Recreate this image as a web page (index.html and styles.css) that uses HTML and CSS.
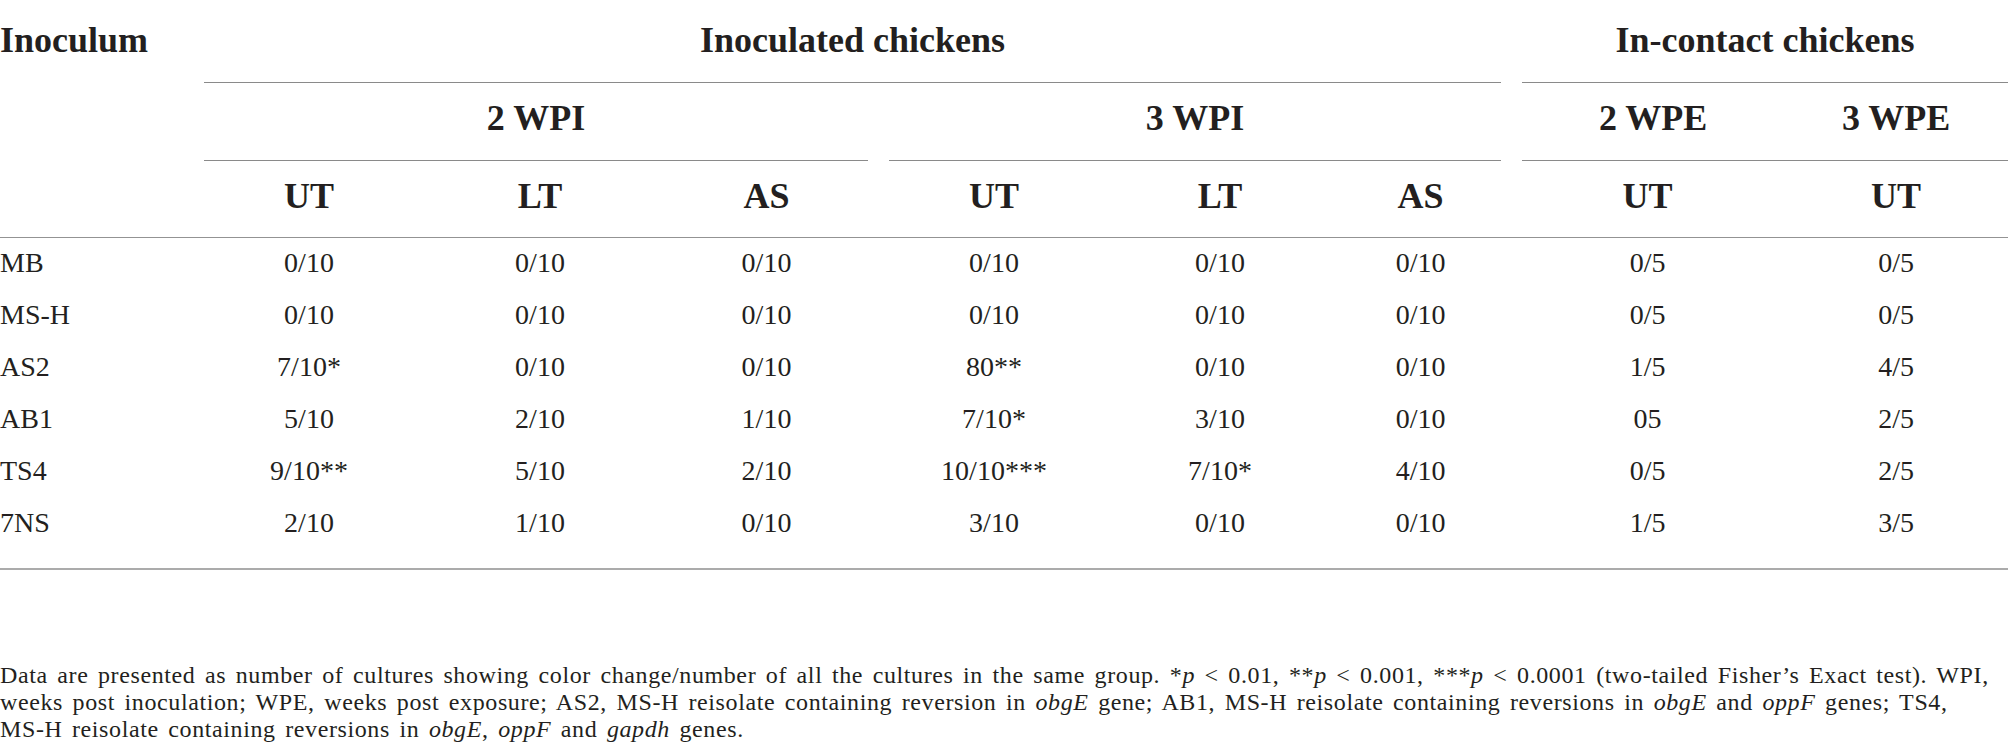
FILE: index.html
```html
<!DOCTYPE html>
<html lang="en">
<head>
  <meta charset="UTF-8">
  <meta name="viewport" content="width=device-width, initial-scale=1.0">
  <title>Cultures showing color change</title>
  <link rel="stylesheet" href="styles.css">
</head>
<body>
  <table class="results">
    <colgroup>
      <col class="c-label">
      <col class="c-ut1">
      <col class="c-lt1">
      <col class="c-as1">
      <col class="c-ut2">
      <col class="c-lt2">
      <col class="c-as2">
      <col class="c-wpe2">
      <col class="c-wpe3">
    </colgroup>
    <thead>
      <tr class="head-top">
        <th rowspan="3" class="label-head">Inoculum</th>
        <th colspan="6"><div class="rule">Inoculated chickens</div></th>
        <th colspan="2"><div class="rule open-right">In-contact chickens</div></th>
      </tr>
      <tr class="head-mid">
        <th colspan="3"><div class="rule">2 WPI</div></th>
        <th colspan="3"><div class="rule">3 WPI</div></th>
        <th><div class="rule open-right">2 WPE</div></th>
        <th><div class="rule open-left open-right">3 WPE</div></th>
      </tr>
      <tr class="head-low">
        <th>UT</th>
        <th>LT</th>
        <th>AS</th>
        <th>UT</th>
        <th>LT</th>
        <th>AS</th>
        <th>UT</th>
        <th>UT</th>
      </tr>
    </thead>
    <tbody>
      <tr>
        <td>MB</td>
        <td>0/10</td><td>0/10</td><td>0/10</td>
        <td>0/10</td><td>0/10</td><td>0/10</td>
        <td>0/5</td><td>0/5</td>
      </tr>
      <tr>
        <td>MS-H</td>
        <td>0/10</td><td>0/10</td><td>0/10</td>
        <td>0/10</td><td>0/10</td><td>0/10</td>
        <td>0/5</td><td>0/5</td>
      </tr>
      <tr>
        <td>AS2</td>
        <td>7/10*</td><td>0/10</td><td>0/10</td>
        <td>80**</td><td>0/10</td><td>0/10</td>
        <td>1/5</td><td>4/5</td>
      </tr>
      <tr>
        <td>AB1</td>
        <td>5/10</td><td>2/10</td><td>1/10</td>
        <td>7/10*</td><td>3/10</td><td>0/10</td>
        <td>05</td><td>2/5</td>
      </tr>
      <tr>
        <td>TS4</td>
        <td>9/10**</td><td>5/10</td><td>2/10</td>
        <td>10/10***</td><td>7/10*</td><td>4/10</td>
        <td>0/5</td><td>2/5</td>
      </tr>
      <tr class="last-row">
        <td>7NS</td>
        <td>2/10</td><td>1/10</td><td>0/10</td>
        <td>3/10</td><td>0/10</td><td>0/10</td>
        <td>1/5</td><td>3/5</td>
      </tr>
    </tbody>
  </table>

  <p class="note">
    <span class="note-line">Data are presented as number of cultures showing color change/number of all the cultures in the same group. *<em>p</em> &lt; 0.01, **<em>p</em> &lt; 0.001, ***<em>p</em> &lt; 0.0001 (two-tailed Fisher’s Exact test). WPI,</span>
    <span class="note-line">weeks post inoculation; WPE, weeks post exposure; AS2, MS-H reisolate containing reversion in <em>obgE</em> gene; AB1, MS-H reisolate containing reversions in <em>obgE</em> and <em>oppF</em> genes; TS4,</span>
    <span class="note-line">MS-H reisolate containing reversions in <em>obgE</em>, <em>oppF</em> and <em>gapdh</em> genes.</span>
  </p>
</body>
</html>
```

FILE: styles.css
```css
html, body {
  margin: 0;
  padding: 0;
  background: #fff;
  color: #231f20;
  font-family: "Liberation Serif", "Times New Roman", serif;
}
.results {
  width: 2008px;
  table-layout: fixed;
  border-collapse: separate;
  border-spacing: 0;
}
.c-label { width: 193px; }
.c-ut1 { width: 232px; }
.c-lt1 { width: 230px; }
.c-as1 { width: 223px; }
.c-ut2 { width: 232px; }
.c-lt2 { width: 220px; }
.c-as2 { width: 181px; }
.c-wpe2 { width: 273px; }
.c-wpe3 { width: 224px; }

th {
  padding: 0;
  font-size: 36px;
  line-height: 40px;
  font-weight: bold;
  text-align: center;
}
.rule {
  margin: 0 10px 0 11px;
  padding: 15px 0 22px;
  border-bottom: 1px solid #8a8a8a;
}
.rule.open-right {
  margin-right: 0;
}
.rule.open-left {
  margin-left: 0;
}
.head-top .rule {
  padding-top: 20px;
}
.label-head {
  text-align: left;
  vertical-align: top;
  padding-top: 20px;
  border-bottom: 1px solid #939393;
}
.head-low th {
  padding: 15px 0 21px;
  border-bottom: 1px solid #939393;
}

td {
  padding: 9px 0 11px;
  font-size: 28px;
  line-height: 32px;
  text-align: center;
}
td:first-child {
  text-align: left;
}
.last-row td {
  padding-bottom: 29px;
  border-bottom: 2px solid #ababab;
}

.note {
  margin: 92px 0 0;
  font-size: 24px;
  line-height: 27px;
  letter-spacing: 0.6px;
  word-spacing: 3px;
}
.note-line {
  display: block;
  white-space: nowrap;
}
```
